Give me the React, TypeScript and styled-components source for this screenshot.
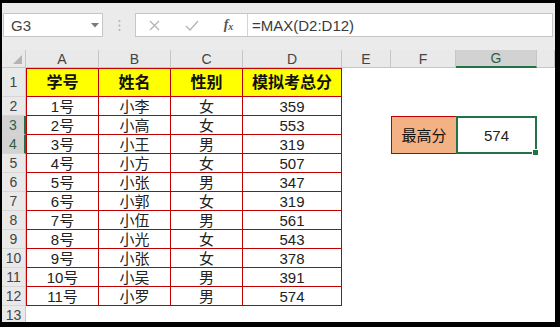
import React from "react";
import styled, { createGlobalStyle } from "styled-components";

const GlobalStyle = createGlobalStyle`
  html, body { margin: 0; padding: 0; background: #fff; }
  * { box-sizing: border-box; }
`;

const UI = `"Liberation Sans", "Noto Sans CJK SC", sans-serif`;
const RED = "#c00000";
const GREEN = "#217346";

const Frame = styled.div`
  width: 560px;
  height: 327px;
  border-style: solid;
  border-color: #000;
  border-width: 3px 5px 5px 2px;
  display: flex;
  flex-direction: column;
  overflow: hidden;
  background: #fff;
  font-family: ${UI};
`;

const FormulaBar = styled.div`
  height: 47px;
  flex: none;
  background: #ebebeb;
  display: flex;
  align-items: flex-start;
  padding: 10px 2px 0 1px;
`;

const NameBox = styled.div`
  width: 100px;
  height: 24px;
  background: #fff;
  border: 1px solid #c6c6c6;
  display: flex;
  align-items: center;
  justify-content: space-between;
  padding: 0 3px 0 7px;
  font-size: 15px;
  color: #444;
`;

const Grip = styled.div`
  width: 32px;
  height: 24px;
  display: flex;
  align-items: center;
  justify-content: center;
`;

const FormulaBox = styled.div`
  flex: 1;
  height: 24px;
  background: #fff;
  border: 1px solid #c6c6c6;
  display: flex;
  align-items: stretch;
`;

const IconSlot = styled.div`
  width: 37px;
  display: flex;
  align-items: center;
  justify-content: center;
`;

const Fx = styled.span`
  font-family: "Liberation Serif", serif;
  font-style: italic;
  font-weight: 700;
  font-size: 14px;
  color: #555;
  line-height: 1;
  & > sub {
    font-size: 10px;
    vertical-align: -1px;
  }
`;

const FormulaInput = styled.div`
  flex: 1;
  border-left: 1px solid #d4d4d4;
  display: flex;
  align-items: center;
  padding-left: 4px;
  font-size: 15px;
  color: #3a3a3a;
`;

const Sheet = styled.div`
  flex: 1;
  display: grid;
  grid-template-columns: 24px 73px 72px 72px 99px 49px 65px 81px 1fr;
  grid-template-rows: 18px 29px repeat(12, 19px);
  overflow: hidden;
  background: #fff;
`;

const Corner = styled.div`
  background: #e9e9e9;
  border-right: 1px solid #c6c6c6;
  border-bottom: 1px solid #c6c6c6;
  position: relative;
  &::after {
    content: "";
    position: absolute;
    right: 3px;
    bottom: 3px;
    width: 0;
    height: 0;
    border-left: 9px solid transparent;
    border-bottom: 9px solid #b4b4b4;
  }
`;

const ColHeader = styled.div<{ $selected?: boolean }>`
  background: ${(p) => (p.$selected ? "#d2d2d2" : "#e9e9e9")};
  border-right: 1px solid #c6c6c6;
  border-bottom: ${(p) => (p.$selected ? `2px solid ${GREEN}` : "1px solid #c6c6c6")};
  display: flex;
  align-items: center;
  justify-content: center;
  font-size: 14px;
  line-height: 1;
  color: ${(p) => (p.$selected ? "#2f5e45" : "#444")};
`;

const RowHeader = styled.div<{ $selected?: boolean }>`
  background: ${(p) => (p.$selected ? "#d2d2d2" : "#e9e9e9")};
  border-right: ${(p) => (p.$selected ? `2px solid ${GREEN}` : "1px solid #c6c6c6")};
  border-bottom: 1px solid #d6d6d6;
  display: flex;
  align-items: center;
  justify-content: center;
  font-size: 14px;
  line-height: 1;
  color: ${(p) => (p.$selected ? "#2f5e45" : "#444")};
`;

const Cell = styled.div<{ $head?: boolean; $first?: boolean }>`
  background: ${(p) => (p.$head ? "#ffff00" : "#fff")};
  border-right: 1px solid ${RED};
  border-bottom: 1px solid ${RED};
  border-left: ${(p) => (p.$first ? `1px solid ${RED}` : "none")};
  border-top: ${(p) => (p.$head ? `1px solid ${RED}` : "none")};
  display: flex;
  align-items: center;
  justify-content: center;
  font-size: ${(p) => (p.$head ? "16px" : "15px")};
  font-weight: ${(p) => (p.$head ? 700 : 400)};
  line-height: 1;
  color: ${(p) => (p.$head ? "#111" : "#222")};
  padding-top: ${(p) => (p.$head ? "1px" : "0")};
`;

const Blank = styled.div`
  background: #fff;
`;

const LabelCell = styled.div`
  grid-row: span 2;
  background: #f4b183;
  border: 1px solid ${RED};
  border-right: none;
  display: flex;
  align-items: center;
  justify-content: center;
  font-size: 15px;
  line-height: 1;
  color: #111;
`;

const ActiveCell = styled.div`
  grid-row: span 2;
  border: 2px solid ${GREEN};
  position: relative;
  display: flex;
  align-items: center;
  justify-content: center;
  font-size: 15px;
  line-height: 1;
  color: #222;
`;

const FillHandle = styled.span`
  position: absolute;
  right: -4px;
  bottom: -4px;
  width: 7px;
  height: 7px;
  background: ${GREEN};
  border: 1px solid #fff;
`;

const rows: [string, string, string, string][] = [
  ["1号", "小李", "女", "359"],
  ["2号", "小高", "女", "553"],
  ["3号", "小王", "男", "319"],
  ["4号", "小方", "女", "507"],
  ["5号", "小张", "男", "347"],
  ["6号", "小郭", "女", "319"],
  ["7号", "小伍", "男", "561"],
  ["8号", "小光", "女", "543"],
  ["9号", "小张", "女", "378"],
  ["10号", "小吴", "男", "391"],
  ["11号", "小罗", "男", "574"],
];

const cols = ["A", "B", "C", "D", "E", "F", "G"];

export default function App() {
  return (
    <>
      <GlobalStyle />
      <Frame>
        <FormulaBar>
          <NameBox>
            <span>G3</span>
            <svg width="8" height="5" viewBox="0 0 8 5">
              <path d="M0 0 L8 0 L4 4.5 Z" fill="#7a7a7a" />
            </svg>
          </NameBox>
          <Grip>
            <svg width="3" height="13" viewBox="0 0 3 13">
              <circle cx="1.5" cy="2" r="1" fill="#b0b0b0" />
              <circle cx="1.5" cy="6.5" r="1" fill="#b0b0b0" />
              <circle cx="1.5" cy="11" r="1" fill="#b0b0b0" />
            </svg>
          </Grip>
          <FormulaBox>
            <IconSlot>
              <svg width="11" height="11" viewBox="0 0 11 11">
                <path d="M1 1 L10 10 M10 1 L1 10" stroke="#b4b4b4" strokeWidth="1.3" fill="none" />
              </svg>
            </IconSlot>
            <IconSlot>
              <svg width="14" height="11" viewBox="0 0 14 11">
                <path d="M1 6 L5 10 L13 1" stroke="#b4b4b4" strokeWidth="1.3" fill="none" />
              </svg>
            </IconSlot>
            <IconSlot>
              <Fx>
                f<sub>x</sub>
              </Fx>
            </IconSlot>
            <FormulaInput>=MAX(D2:D12)</FormulaInput>
          </FormulaBox>
        </FormulaBar>
        <Sheet>
          <Corner />
          {cols.map((c) => (
            <ColHeader key={c} $selected={c === "G"}>
              {c}
            </ColHeader>
          ))}
          <ColHeader />

          <RowHeader>1</RowHeader>
          <Cell $head $first>学号</Cell>
          <Cell $head>姓名</Cell>
          <Cell $head>性别</Cell>
          <Cell $head>模拟考总分</Cell>
          <Blank />
          <Blank />
          <Blank />
          <Blank />

          {rows.map((r, i) => {
            const n = i + 2;
            return (
              <React.Fragment key={n}>
                <RowHeader $selected={n === 3 || n === 4}>{n}</RowHeader>
                <Cell $first>{r[0]}</Cell>
                <Cell>{r[1]}</Cell>
                <Cell>{r[2]}</Cell>
                <Cell>{r[3]}</Cell>
                <Blank />
                {n === 3 && (
                  <>
                    <LabelCell>最高分</LabelCell>
                    <ActiveCell>
                      574
                      <FillHandle />
                    </ActiveCell>
                  </>
                )}
                {n !== 3 && n !== 4 && (
                  <>
                    <Blank />
                    <Blank />
                  </>
                )}
                <Blank />
              </React.Fragment>
            );
          })}

          <RowHeader>13</RowHeader>
          {Array.from({ length: 8 }).map((_, k) => (
            <Blank key={k} />
          ))}
        </Sheet>
      </Frame>
    </>
  );
}
